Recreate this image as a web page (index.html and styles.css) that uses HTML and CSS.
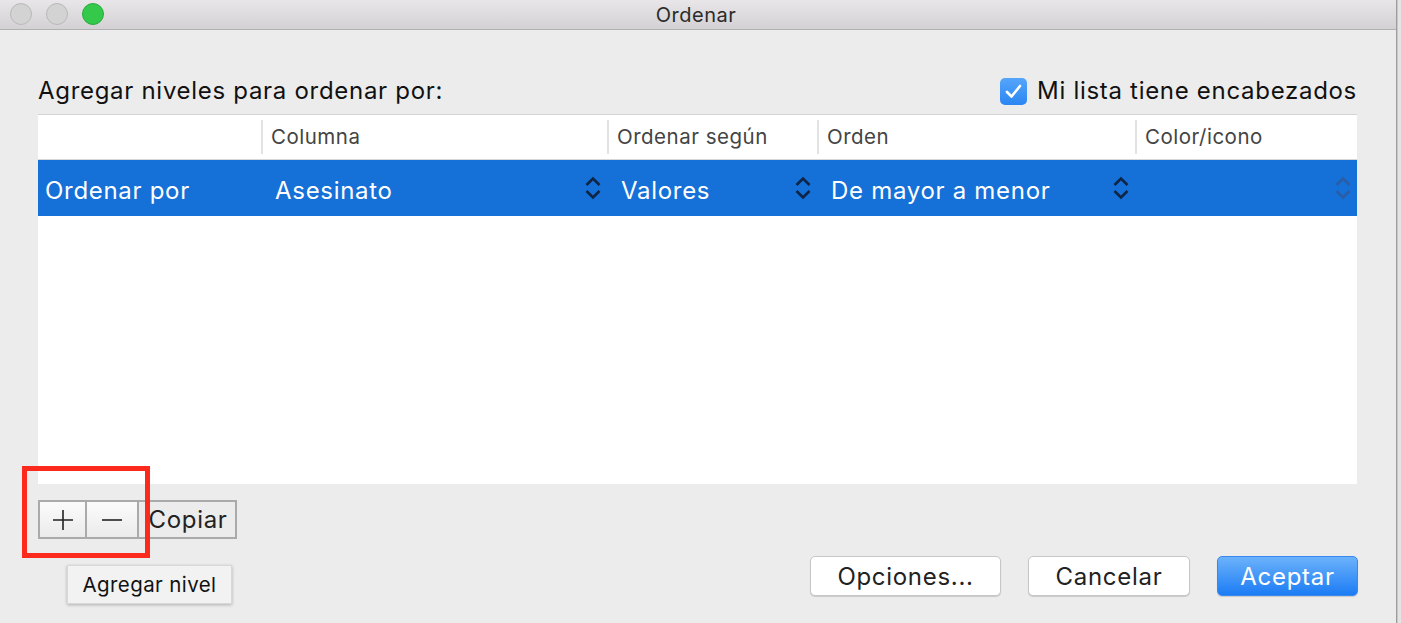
FILE: index.html
```html
<!DOCTYPE html>
<html lang="es">
<head>
    <meta charset="UTF-8">
    <title>Ordenar</title>
    <link rel="stylesheet" href="styles.css">
</head>
<body>
    <div class="window">
        <div class="titlebar">
            <div class="lights">
                <span class="light"></span>
                <span class="light"></span>
                <span class="light green"></span>
            </div>
            <div class="title">Ordenar</div>
        </div>

        <div class="content">
            <div class="toprow">
                <div class="label">Agregar niveles para ordenar por:</div>
                <label class="check">
                    <span class="box">
                        <svg width="17" height="15" viewBox="0 0 17 15"><path d="M2 8 L6.5 12.5 L15 2" fill="none" stroke="#fff" stroke-width="2.6" stroke-linecap="round" stroke-linejoin="round"/></svg>
                    </span>
                    Mi lista tiene encabezados
                </label>
            </div>

            <div class="table">
                <div class="thead">
                    <div class="th"></div>
                    <div class="th sep">Columna</div>
                    <div class="th sep">Ordenar según</div>
                    <div class="th sep">Orden</div>
                    <div class="th sep">Color/icono</div>
                </div>
                <div class="trow selected">
                    <div class="td first">Ordenar por</div>
                    <div class="td">Asesinato <span class="stepper"></span></div>
                    <div class="td">Valores <span class="stepper"></span></div>
                    <div class="td">De mayor a menor <span class="stepper"></span></div>
                    <div class="td"><span class="stepper dim"></span></div>
                </div>
            </div>

            <div class="bottom">
                <div class="segmented">
                    <button class="seg icon">
                        <svg width="22" height="22" viewBox="0 0 22 22"><path d="M11 1 V21 M1 11 H21" stroke="#222" stroke-width="1.6"/></svg>
                    </button>
                    <button class="seg icon wide">
                        <svg width="22" height="22" viewBox="0 0 22 22"><path d="M1 11 H21" stroke="#222" stroke-width="1.6"/></svg>
                    </button>
                    <button class="seg text">Copiar</button>
                </div>
                <div class="actions">
                    <button class="btn opt">Opciones...</button>
                    <button class="btn cancel">Cancelar</button>
                    <button class="btn primary">Aceptar</button>
                </div>
                <div class="highlight"></div>
                <div class="tooltip">Agregar nivel</div>
            </div>
        </div>
    </div>
    <div class="desk"></div>
</body>
</html>
```

FILE: styles.css
```css
body {
    margin: 0;
    display: flex;
    width: 1401px;
    height: 623px;
    overflow: hidden;
    font-family: Inter, "Noto Sans", sans-serif;
    color: #111;
    background: #ececec;
}
.window {
    width: 1397px;
    height: 623px;
    background: #ececec;
    border-right: 1px solid #9c9c9c;
    box-sizing: border-box;
}
.desk {
    flex: 1;
    background: #e4e4e4;
    border-left: 1px solid #c8c8c8;
}
.titlebar {
    position: relative;
    height: 29px;
    border-bottom: 1px solid #b1b1b1;
    background: linear-gradient(#e8e6e8, #d3d1d3);
    display: flex;
    align-items: center;
    justify-content: center;
}
.lights {
    position: absolute;
    left: 10px;
    top: 3px;
    display: flex;
    gap: 14px;
}
.light {
    width: 20px;
    height: 20px;
    border-radius: 50%;
    background: #d3d3d3;
    border: 1px solid #b9b9b9;
}
.light.green {
    background: #34c94a;
    border-color: #2aab3c;
}
.title {
    font-size: 20px;
    letter-spacing: 0.5px;
    color: #2b2b2b;
    margin-left: -4px;
}
.content {
    padding: 0 39px 0 38px;
}
.toprow {
    height: 84px;
    display: flex;
    align-items: flex-end;
    justify-content: space-between;
    box-sizing: border-box;
    padding-bottom: 8px;
}
.label, .check, .td, .seg.text, .btn {
    font-size: 24px;
    letter-spacing: 0.7px;
}
.label {
    line-height: 30px;
}
.check {
    display: flex;
    align-items: center;
    gap: 10px;
    line-height: 30px;
}
.box {
    width: 27px;
    height: 27px;
    border-radius: 5px;
    background: linear-gradient(#55a5fb, #2b86f2);
    display: flex;
    align-items: center;
    justify-content: center;
}
.table {
    height: 370px;
    background: #fff;
    border-top: 1px solid #d4d4d4;
    box-sizing: border-box;
}
.thead, .trow {
    display: grid;
    grid-template-columns: 223px 346px 210px 318px 223px;
}
.thead {
    height: 45px;
    border-bottom: 1px solid #d6d6d6;
    box-sizing: border-box;
    align-items: center;
}
.th {
    font-size: 20.5px;
    letter-spacing: 0.5px;
    color: #444;
    padding-left: 10px;
    height: 34px;
    line-height: 34px;
}
.th.sep {
    border-left: 2px solid #e2e2e2;
    padding-left: 8px;
}
.trow {
    height: 56px;
}
.selected {
    background: #1570d7;
    color: #fff;
}
.td {
    display: flex;
    align-items: center;
    padding-left: 14px;
    padding-right: 6px;
    padding-top: 5px;
}
.td.first {
    padding-left: 7px;
}
.stepper {
    margin-left: auto;
    width: 16px;
    height: 26px;
    margin-top: -5px;
    background:
        url("data:image/svg+xml,%3Csvg xmlns='http://www.w3.org/2000/svg' width='16' height='26'%3E%3Cpath d='M1.5 10 L8 3.5 L14.5 10 M1.5 16 L8 22.5 L14.5 16' fill='none' stroke='%230f2545' stroke-width='2.6'/%3E%3C/svg%3E") no-repeat;
}
.stepper.dim {
    margin-right: 1px;
    background:
        url("data:image/svg+xml,%3Csvg xmlns='http://www.w3.org/2000/svg' width='16' height='26'%3E%3Cpath d='M1.5 10 L8 3.5 L14.5 10 M1.5 16 L8 22.5 L14.5 16' fill='none' stroke='%232a5da6' stroke-width='2.6'/%3E%3C/svg%3E") no-repeat;
}
.bottom {
    position: relative;
    padding-top: 16px;
}
.segmented {
    display: flex;
    height: 39px;
    width: 199px;
    border: 2px solid #aaa;
    box-sizing: border-box;
}
.seg {
    border: none;
    margin: 0;
    padding: 0;
    font-family: inherit;
    background: #ececec;
    display: flex;
    align-items: center;
    justify-content: center;
}
.seg.icon {
    width: 47px;
    background: linear-gradient(#fbfbfb, #ebebeb);
    border-right: 2px solid #aaa;
}
.seg.icon.wide {
    width: 52px;
}
.seg.text {
    flex: 1;
    color: #222;
    padding-left: 2px;
}
.actions {
    display: flex;
    justify-content: flex-end;
    gap: 27px;
    margin-top: 17px;
    margin-right: -1px;
}
.btn {
    height: 40px;
    font-family: inherit;
    color: #222;
    background: #fff;
    border: 1px solid #c6c6c6;
    border-radius: 5px;
    box-shadow: 0 1px 1px rgba(0,0,0,0.15);
    padding: 0;
}
.opt { width: 191px; }
.cancel { width: 162px; }
.primary {
    width: 141px;
    color: #fff;
    background: linear-gradient(#6bb2fb, #1c7cf4);
    border-color: #3a88ee;
}
.highlight {
    position: absolute;
    left: -16px;
    top: -18px;
    width: 118px;
    height: 82px;
    border: 5px solid #fb2a1c;
}
.tooltip {
    position: absolute;
    left: 29px;
    top: 81px;
    width: 165px;
    height: 39px;
    box-sizing: border-box;
    background: #f2f2f2;
    border: 1px solid #d8d8d8;
    box-shadow: 0 1px 3px rgba(0,0,0,0.25);
    font-size: 20.5px;
    letter-spacing: 0.4px;
    display: flex;
    align-items: center;
    justify-content: center;
}
```
